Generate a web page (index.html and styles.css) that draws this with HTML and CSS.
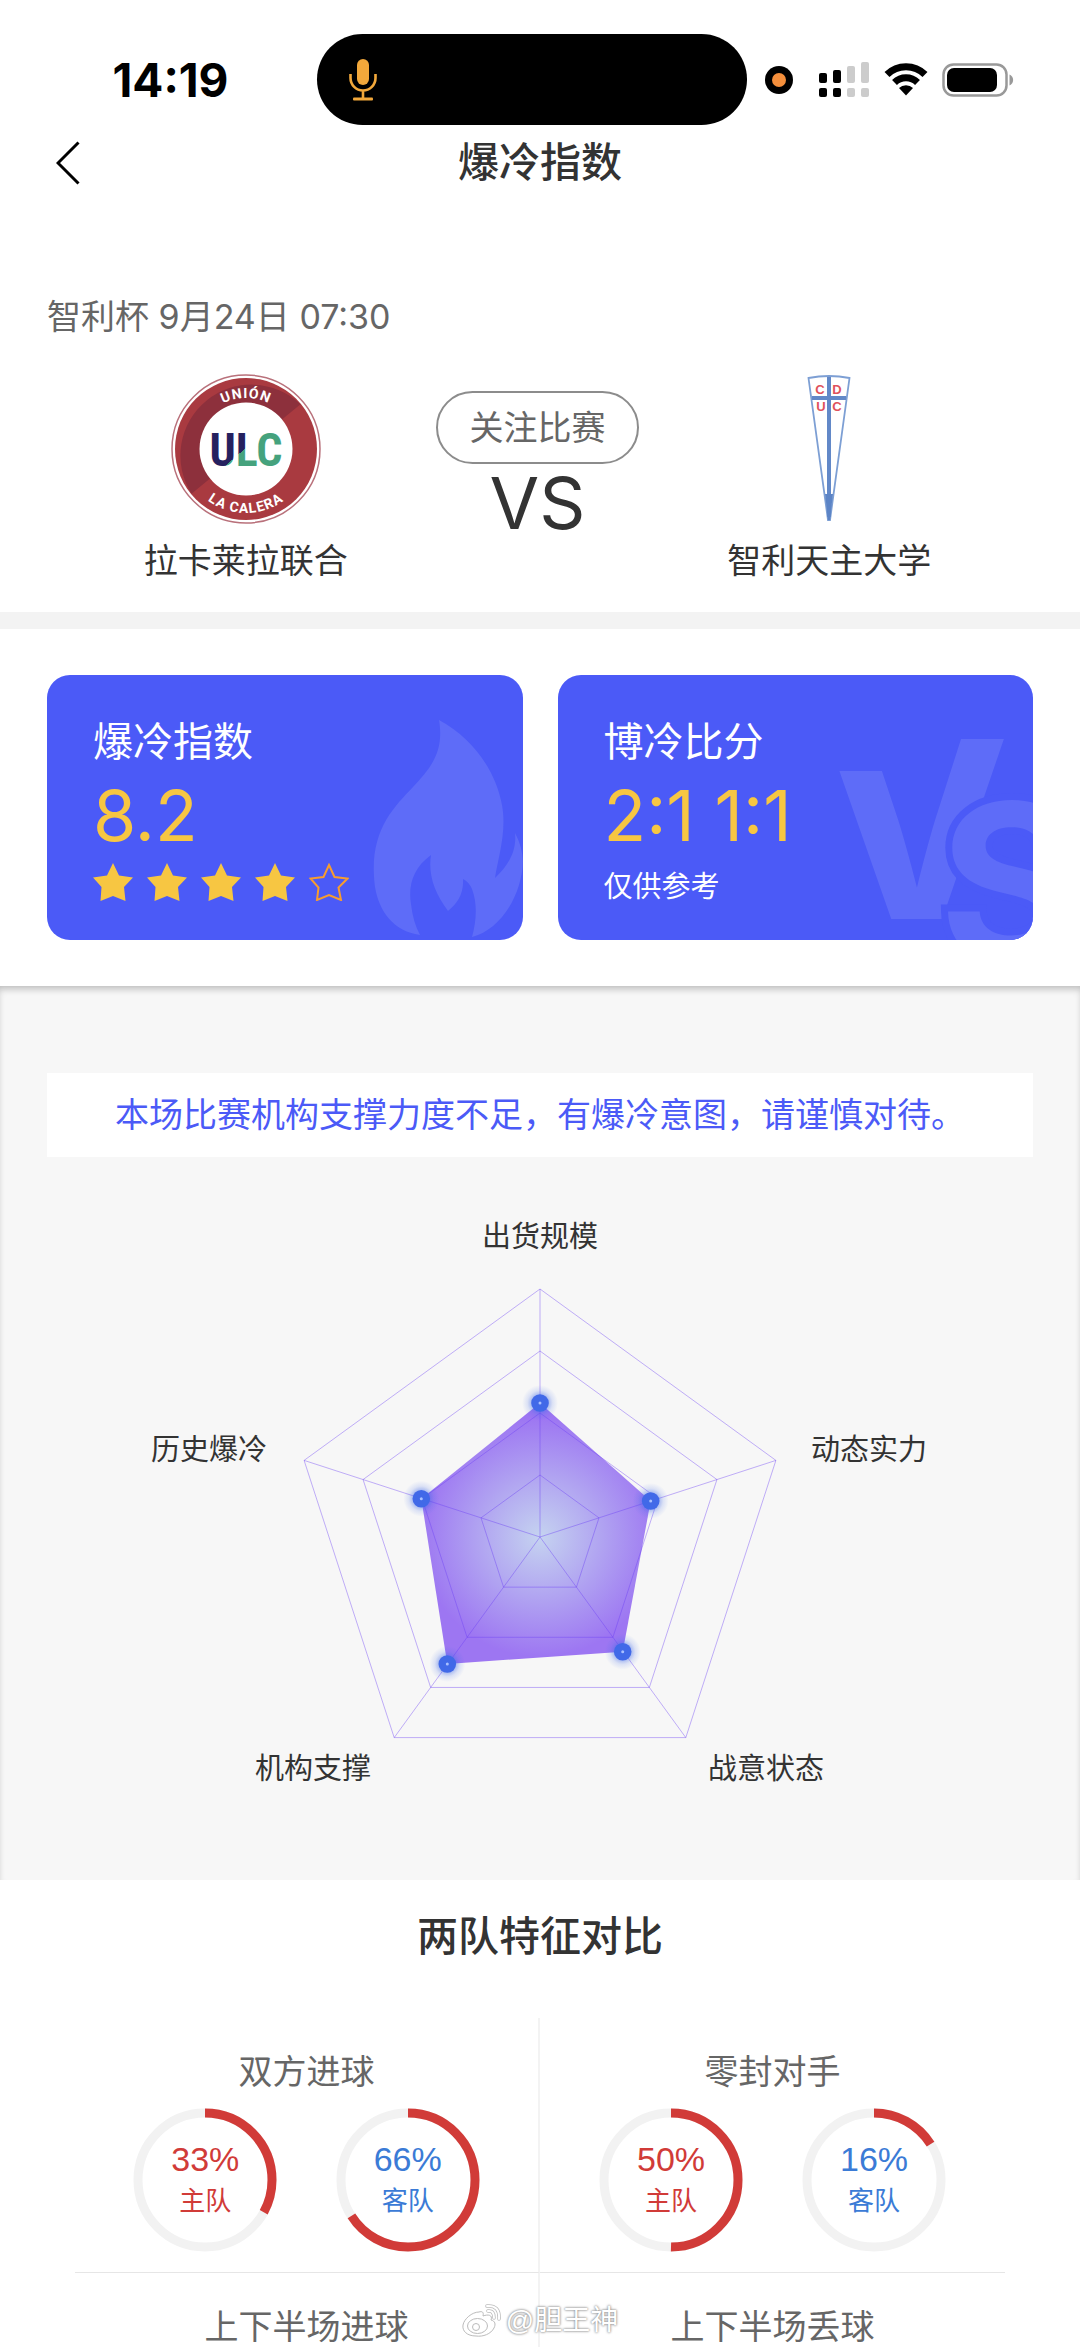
FILE: index.html
```html
<!DOCTYPE html>
<html lang="zh-CN">
<head>
<meta charset="utf-8">
<meta name="viewport" content="width=device-width, initial-scale=1">
<title>爆冷指数</title>
<link rel="stylesheet" href="styles.css">
</head>
<body>
<header class="status">
  <span class="status-time">14:19</span>
  <div class="island">
    <svg class="mic" viewBox="0 0 28 42" aria-hidden="true"><rect x="8" y="0" width="12" height="26" rx="6" fill="#f2a83b"/><path d="M1.500 15v4a12.500 12.500 0 0 0 25 0v-4M14 32v8" fill="none" stroke="#f2a83b" stroke-width="2.600"/><rect x="4" y="38.500" width="20" height="3" rx="1" fill="#f2a83b"/></svg>
  </div>
  <div class="status-icons">
    <svg width="28" height="28" viewBox="0 0 28 28" aria-hidden="true"><circle cx="14" cy="14" r="14"/><circle cx="14" cy="14" r="7" fill="#f58f3c"/></svg>
    <svg class="signal" width="50" height="36" viewBox="0 0 50 36" aria-hidden="true"><g><rect x="0" y="11" width="8" height="10" rx="2"/><rect x="14" y="8" width="8" height="13" rx="2"/><rect x="0" y="26" width="8" height="9" rx="2"/><rect x="14" y="26" width="8" height="9" rx="2"/></g><g fill="#ccc"><rect x="28" y="4" width="8" height="17" rx="2"/><rect x="42" y="0" width="8" height="21" rx="2"/><rect x="28" y="26" width="8" height="9" rx="2"/><rect x="42" y="26" width="8" height="9" rx="2"/></g></svg>
    <svg class="wifi" width="44" height="33" viewBox="0 0 44 33" aria-hidden="true"><path d="M3 11.500a27 27 0 0 1 38 0M10.500 19.500a16.500 16.500 0 0 1 23 0" fill="none" stroke="#000" stroke-width="7"/><path d="M22 32.500l-7-7.500a10 10 0 0 1 14 0z"/></svg>
    <svg class="battery" width="72" height="34" viewBox="0 0 72 34" aria-hidden="true"><rect x="1.500" y="1.500" width="63" height="31" rx="10" fill="none" stroke="#999" stroke-width="2.500"/><rect x="5" y="5" width="50" height="24" rx="7"/><path d="M67.500 11.500a6 6 0 0 1 0 11z" fill="#999"/></svg>
  </div>
</header>

<nav class="nav">
  <button class="back" type="button" aria-label="返回"><svg viewBox="0 0 24 44" aria-hidden="true"><path d="M22.500 1.500L2 22l20.500 20.500" fill="none" stroke="#000" stroke-width="3"/></svg></button>
  <h1 class="heading">爆冷指数</h1>
</nav>

<main>
  <section class="match">
    <p class="match-date">智利杯 9月24日 07:30</p>
    <div class="teams">
      <div class="team">
        <svg class="crest" viewBox="0 0 150 150" role="img" aria-label="Unión La Calera">
          <defs>
            <linearGradient id="ulc" gradientUnits="userSpaceOnUse" x1="63" y1="63" x2="84" y2="87"><stop offset=".5" stop-color="#25215f"/><stop offset=".5" stop-color="#45a27d"/></linearGradient>
            <path id="arc-top" d="M24 75a51 51 0 0 1 102 0"/>
            <path id="arc-bottom" d="M11 75a64 64 0 0 0 128 0"/>
          </defs>
          <circle cx="75" cy="75" r="74" fill="#fff" stroke="#b9717b" stroke-width="1.500"/>
          <circle cx="75" cy="75" r="71" fill="#a93a40"/>
          <path d="M20.500 119.700A71 71 0 0 1 129.500 30.300z" fill="#8d303c"/>
          <circle cx="75" cy="75" r="46.500" fill="#fff"/>
          <text class="crest-ring" text-anchor="middle"><textPath href="#arc-top" startOffset="50%">UNIÓN</textPath></text>
          <text class="crest-ring" text-anchor="middle"><textPath href="#arc-bottom" startOffset="50%">LA CALERA</textPath></text>
          <text class="crest-name" x="75" y="92" text-anchor="middle" fill="url(#ulc)">ULC</text>
        </svg>
        <h2 class="team-name">拉卡莱拉联合</h2>
      </div>
      <div class="versus">
        <button class="follow" type="button">关注比赛</button>
        <span class="vs">VS</span>
      </div>
      <div class="team">
        <svg class="crest" viewBox="0 0 150 150" role="img" aria-label="Universidad Católica">
          <path d="M54.500 4q20.500-4 41 0L76 146h-2z" fill="#fff" stroke="#7d9fd4" stroke-width="1.800"/>
          <path d="M75 3v140M58 24h34" stroke="#6288c8" stroke-width="4"/>
          <path d="M71 120h8l-3 26h-2z" fill="#5c84c6"/>
          <g class="crest-letters" text-anchor="middle"><text x="66" y="20">C</text><text x="83" y="20">D</text><text x="67" y="37">U</text><text x="83" y="37">C</text></g>
        </svg>
        <h2 class="team-name">智利天主大学</h2>
      </div>
    </div>
  </section>

  <section class="cards">
    <article class="card">
      <svg class="card-art" viewBox="276 0 200 265" aria-hidden="true"><path fill="#5e6cf8" d="M392 45C427 64 449 97 455 130C460 157 451 183 448 203C461 191 470 176 468 158C477 175 478 190 472 210C464 237 445 257 425 262C429 248 431 230 425 214Q422 207 416 204C417 219 410 229 401 236C387 217 381 199 384 180C366 193 361 211 364 229Q366 247 373 260C346 256 332 236 328 212C321 158 345 134 366 112C386 91 397 75 392 45z"/></svg>
      <h3 class="card-title">爆冷指数</h3>
      <p class="card-value">8.2</p>
      <div class="stars" role="img" aria-label="4 / 5">
        <svg class="star" viewBox="0 0 40 38"><path d="M20 0l6 12.500 14 2-9 9.500 1.500 14-12.500-5L7.500 38l1-14L0 14.500l14-2z"/></svg>
        <svg class="star" viewBox="0 0 40 38"><path d="M20 0l6 12.500 14 2-9 9.500 1.500 14-12.500-5L7.500 38l1-14L0 14.500l14-2z"/></svg>
        <svg class="star" viewBox="0 0 40 38"><path d="M20 0l6 12.500 14 2-9 9.500 1.500 14-12.500-5L7.500 38l1-14L0 14.500l14-2z"/></svg>
        <svg class="star" viewBox="0 0 40 38"><path d="M20 0l6 12.500 14 2-9 9.500 1.500 14-12.500-5L7.500 38l1-14L0 14.500l14-2z"/></svg>
        <svg class="star star-empty" viewBox="0 0 40 38"><path d="M20 2l5.500 12 13 1.500-9 9 2.500 12.500-12-5-12 5 1.500-12.500-8-9 13-1.500z"/></svg>
      </div>
    </article>
    <article class="card">
      <svg class="card-art" viewBox="276 0 200 265" aria-hidden="true">
        <clipPath id="v-cut"><path d="M260 96h94V64h122v201H260z"/></clipPath>
        <text class="art-v" x="359" y="244" text-anchor="middle" clip-path="url(#v-cut)">V</text>
        <text class="art-s" x="382" y="286">S</text>
      </svg>
      <h3 class="card-title">博冷比分</h3>
      <p class="card-value">2:1 1:1</p>
      <p class="card-note">仅供参考</p>
    </article>
  </section>

  <section class="report">
    <p class="notice">本场比赛机构支撑力度不足，有爆冷意图，请谨慎对待。</p>
    <svg class="radar" viewBox="0 0 1080 723" role="img" aria-label="爆冷指数雷达图">
      <defs>
        <radialGradient id="area" gradientUnits="userSpaceOnUse" cx="540" cy="380" r="120"><stop offset="0" stop-color="#c5d3f0"/><stop offset="1" stop-color="#9d76f2"/></radialGradient>
        <radialGradient id="glow"><stop offset=".4" stop-color="#4169e8" stop-opacity=".5"/><stop offset=".7" stop-color="#4169e8" stop-opacity=".15"/><stop offset="1" stop-color="#4169e8" stop-opacity="0"/></radialGradient>
        <g id="dot"><circle r="18" fill="url(#glow)"/><circle r="8.800" fill="#4169e8"/><circle r="1.500" fill="#a9c0ff"/></g>
        <path id="ring" d="M0-248L235.900-76.600L145.800 200.600H-145.800L-235.900-76.600z" vector-effect="non-scaling-stroke"/>
      </defs>
      <path d="M540 246L650.700 344L622.700 494.700L447.300 507L421.300 341.700z" fill="url(#area)"/>
      <g class="web">
        <use href="#ring" transform="translate(540 380)"/>
        <use href="#ring" transform="translate(540 380) scale(.75)"/>
        <use href="#ring" transform="translate(540 380) scale(.5)"/>
        <use href="#ring" transform="translate(540 380) scale(.25)"/>
        <path d="M540 380V132M540 380L775.900 303.400M540 380L685.800 580.600M540 380L394.200 580.600M540 380L304.100 303.400"/>
      </g>
      <use href="#dot" x="540" y="246"/><use href="#dot" x="650.700" y="344"/><use href="#dot" x="622.700" y="494.700"/><use href="#dot" x="447.300" y="507"/><use href="#dot" x="421.300" y="341.700"/>
      <g class="radar-label" text-anchor="middle">
        <text x="540" y="90">出货规模</text>
        <text x="869" y="303">动态实力</text>
        <text x="766" y="622">战意状态</text>
        <text x="313" y="622">机构支撑</text>
        <text x="209" y="303">历史爆冷</text>
      </g>
    </svg>
  </section>

  <section class="compare">
    <h2 class="heading">两队特征对比</h2>
    <div class="grid">
      <div class="cell">
        <h3 class="cell-title">双方进球</h3>
        <div class="rings">
          <div class="ring home"><svg viewBox="0 0 144 144" aria-hidden="true"><circle cx="72" cy="72" r="67"/><circle class="arc" cx="72" cy="72" r="67" pathLength="100" stroke-dasharray="33 100"/></svg><div class="ring-text"><span class="percent">33%</span><span class="side">主队</span></div></div>
          <div class="ring away"><svg viewBox="0 0 144 144" aria-hidden="true"><circle cx="72" cy="72" r="67"/><circle class="arc" cx="72" cy="72" r="67" pathLength="100" stroke-dasharray="66 100"/></svg><div class="ring-text"><span class="percent">66%</span><span class="side">客队</span></div></div>
        </div>
      </div>
      <div class="cell">
        <h3 class="cell-title">零封对手</h3>
        <div class="rings">
          <div class="ring home"><svg viewBox="0 0 144 144" aria-hidden="true"><circle cx="72" cy="72" r="67"/><circle class="arc" cx="72" cy="72" r="67" pathLength="100" stroke-dasharray="50 100"/></svg><div class="ring-text"><span class="percent">50%</span><span class="side">主队</span></div></div>
          <div class="ring away"><svg viewBox="0 0 144 144" aria-hidden="true"><circle cx="72" cy="72" r="67"/><circle class="arc" cx="72" cy="72" r="67" pathLength="100" stroke-dasharray="16 100"/></svg><div class="ring-text"><span class="percent">16%</span><span class="side">客队</span></div></div>
        </div>
      </div>
      <div class="cell"><h3 class="cell-title">上下半场进球</h3></div>
      <div class="cell"><h3 class="cell-title">上下半场丢球</h3></div>
    </div>
    <div class="watermark">
      <svg viewBox="0 0 40 34" aria-hidden="true"><path d="M17 8c3-1 5 0 4 4 5-2 10-1 8 4 4 1 5 4 3 8-3 6-11 9-18 8C5 32 0 27 1 21 2 15 10 8 17 8z" fill="#fff" stroke="#bbb"/><ellipse cx="15.500" cy="22" rx="10" ry="7.500" fill="#fff" stroke="#bbb"/><circle cx="14" cy="23" r="3.500" fill="none" stroke="#bbb"/><path d="M26 7q6-1 6 7M25 2q13-1 12 13" fill="none" stroke="#bbb" stroke-width="3.500" stroke-linecap="round"/><path d="M26 7q6-1 6 7M25 2q13-1 12 13" fill="none" stroke="#fff" stroke-width="2" stroke-linecap="round"/></svg>
      <span>@胆王神</span>
    </div>
  </section>
</main>
</body>
</html>
```
FILE: styles.css
```css
* {
  box-sizing: border-box;
}

body {
  margin: 0;
  background: #fff;
  color: #333;
  font-family: "Liberation Sans", "Noto Sans CJK SC", sans-serif;
  font-size: 34px;
  line-height: 40px;
}

h1, h2, h3, p {
  margin: 0;
  font-weight: 400;
}

svg {
  display: block;
}

button {
  padding: 0;
  border: 0;
  background: none;
  color: inherit;
  font: inherit;
  cursor: pointer;
}

.status {
  display: grid;
  grid-template-columns: 1fr 430px 1fr;
  align-items: center;
  padding: 34px 16px 0 0;
}

.status-time {
  padding-left: 24px;
  color: #000;
  font-family: Inter, sans-serif;
  font-size: 46px;
  font-weight: 700;
  text-align: center;
}

.island {
  display: flex;
  align-items: center;
  height: 91px;
  padding-left: 32px;
  border-radius: 46px;
  background: #000;
}

.mic {
  width: 28px;
}

.status-icons {
  display: flex;
  align-items: center;
  padding-left: 18px;
}

.signal {
  margin-left: 26px;
}

.wifi {
  margin-left: 15px;
}

.battery {
  margin-left: 14px;
}

.nav {
  display: grid;
  grid-template-columns: 80px 1fr 80px;
  align-items: center;
  height: 76px;
}

.back {
  padding-left: 56px;
}

.heading {
  color: #333;
  font-size: 41px;
  font-weight: 500;
  line-height: 50px;
  text-align: center;
}

.match {
  padding: 96px 47px 31px;
  border-bottom: 17px solid #f3f3f3;
}

.match-date {
  color: #666;
  font-family: Inter, "Noto Sans CJK SC", sans-serif;
}

.teams {
  display: grid;
  grid-template-columns: repeat(3, 1fr);
  margin-top: 37px;
  padding: 0 58px 0 53px;
}

.team {
  display: flex;
  flex-direction: column;
  align-items: center;
  gap: 17px;
}

.crest {
  width: 150px;
}

.crest-ring {
  fill: #fff;
  font: 700 14px Roboto, sans-serif;
  letter-spacing: 1px;
}

.crest-name {
  font: 700 46px "Roboto Condensed", "Liberation Sans Narrow", "Liberation Sans", sans-serif;
}

.crest-letters {
  fill: #e0525c;
  font: 700 13px "Liberation Sans", sans-serif;
}

.team-name {
  font-size: 34px;
  line-height: 40px;
  white-space: nowrap;
}

.versus {
  display: flex;
  flex-direction: column;
  align-items: center;
  gap: 9px;
  padding-top: 17px;
}

.follow {
  width: 203px;
  height: 73px;
  border: 2px solid #8c8c8c;
  border-radius: 37px;
  color: #666;
}

.vs {
  font-family: Inter, sans-serif;
  font-size: 72px;
  line-height: 60px;
}

.cards {
  display: grid;
  grid-template-columns: 1fr 1fr;
  gap: 35px;
  padding: 46px 47px;
}

.card {
  position: relative;
  overflow: hidden;
  padding: 43px 46px 29px;
  border-radius: 23px;
  background: #4b5af7;
  color: #fff;
}

.card-art {
  position: absolute;
  top: 0;
  right: 0;
  width: 200px;
}

.art-v,
.art-s {
  fill: #5e6cf8;
  font-family: Inter, sans-serif;
  font-weight: 700;
}

.art-v {
  font-size: 262px;
}

.art-s {
  font-size: 218px;
  stroke: #4b5af7;
  stroke-width: 14px;
  paint-order: stroke;
}

.card-title {
  position: relative;
  font-size: 40px;
  line-height: 48px;
}

.card-value {
  position: relative;
  margin-top: 14px;
  color: #f7c642;
  font-family: Inter, sans-serif;
  font-size: 70px;
  line-height: 72px;
}

.stars {
  display: flex;
  gap: 14px;
  margin-top: 11px;
}

.star {
  width: 40px;
  fill: #f7c642;
}

.star-empty {
  fill: none;
  stroke: #f79c2e;
  stroke-width: 2px;
}

.card-note {
  margin-top: 11px;
  font-size: 29px;
  line-height: 48px;
}

.report {
  padding-top: 87px;
  background: #f7f7f7;
  box-shadow: inset 0 5px 7px -2px rgba(0, 0, 0, 0.24);
}

.notice {
  margin: 0 47px;
  padding: 22px 0;
  background: #fff;
  color: #4b5af7;
  text-align: center;
}

.radar {
  width: 100%;
}

.web {
  fill: none;
  stroke: #6a3df5;
  stroke-opacity: 0.4;
  stroke-width: 1px;
}

.radar-label {
  fill: #333;
  font-size: 29px;
}

.compare {
  position: relative;
  padding: 32px 75px 0;
  background: #fff;
}

.grid {
  display: grid;
  grid-template-columns: 1fr 1fr;
  margin-top: 56px;
}

.cell {
  padding-top: 34px;
}

.cell:nth-child(odd) {
  border-right: 2px solid #f3f3f3;
}

.cell:nth-child(-n + 2) {
  padding-bottom: 20px;
  border-bottom: 1px solid #e6e6e6;
}

.cell-title {
  color: #666;
  font-size: 34px;
  line-height: 40px;
  text-align: center;
}

.rings {
  display: flex;
  justify-content: space-evenly;
  margin-top: 16px;
}

.ring {
  display: grid;
  width: 144px;
}

.ring svg,
.ring-text {
  grid-area: 1 / 1;
}

.ring circle {
  fill: none;
  stroke: #f2f2f2;
  stroke-width: 9px;
}

.ring .arc {
  stroke: #d13b38;
  transform: rotate(-90deg);
  transform-origin: center;
}

.ring-text {
  display: flex;
  flex-direction: column;
  align-items: center;
  justify-content: center;
  gap: 2px;
}

.home {
  color: #d13b38;
}

.away {
  color: #3b7bd6;
}

.side {
  font-size: 26px;
}

.watermark {
  position: absolute;
  right: 0;
  bottom: 6px;
  left: 0;
  display: flex;
  align-items: center;
  justify-content: center;
  gap: 4px;
  color: #fff;
  font-size: 28px;
  text-shadow: 0 0 2px #888, 0 0 3px #999;
}

.watermark svg {
  width: 40px;
}
```
